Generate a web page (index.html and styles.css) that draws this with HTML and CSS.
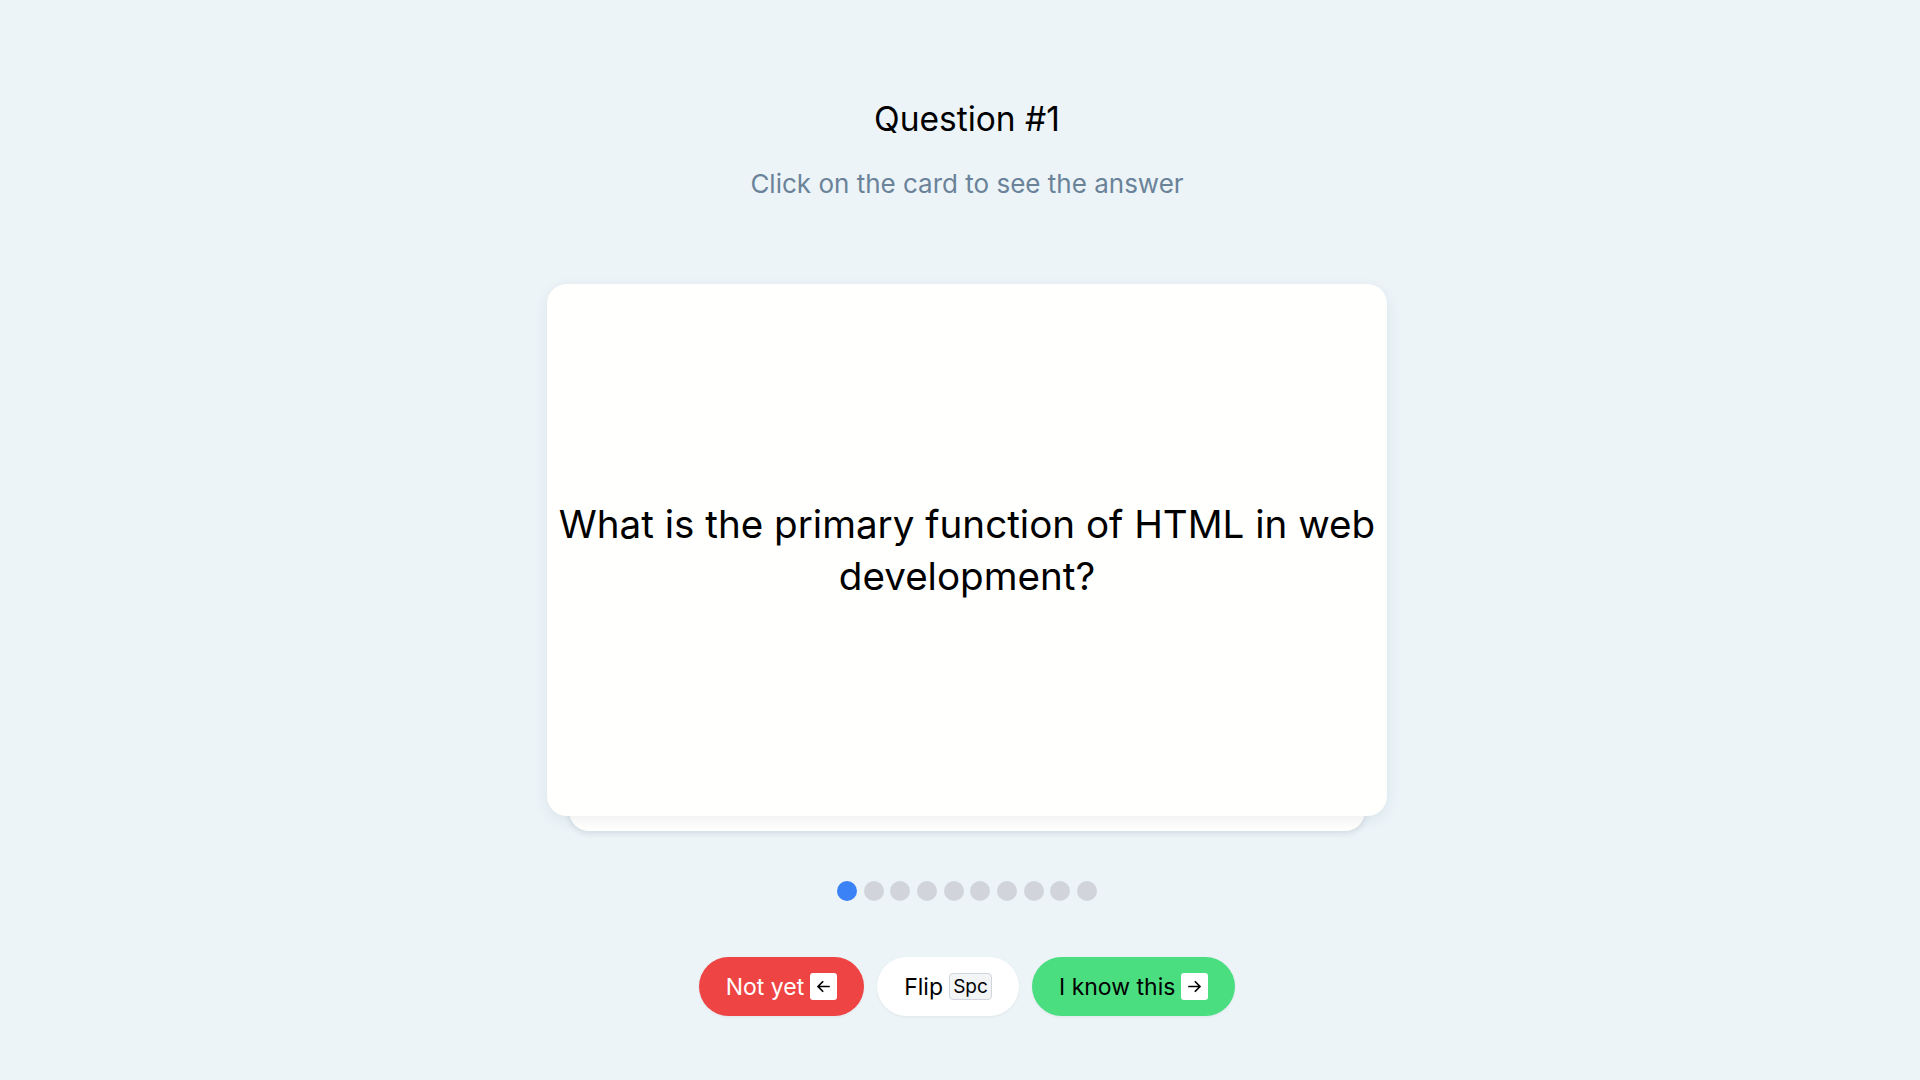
FILE: index.html
```html
<!DOCTYPE html>
<html lang="en">
<head>
<meta charset="utf-8">
<title>Flashcards</title>
<link rel="stylesheet" href="styles.css">
</head>
<body>
<main class="page">
  <h1 class="title">Question #1</h1>
  <p class="subtitle">Click on the card to see the answer</p>

  <div class="deck">
    <div class="card">
      <p class="question">What is the primary function of HTML in web development?</p>
    </div>
  </div>

  <div class="dots">
    <span class="dot active"></span>
    <span class="dot"></span>
    <span class="dot"></span>
    <span class="dot"></span>
    <span class="dot"></span>
    <span class="dot"></span>
    <span class="dot"></span>
    <span class="dot"></span>
    <span class="dot"></span>
    <span class="dot"></span>
  </div>

  <div class="actions">
    <button class="btn btn-red">Not yet
      <span class="key key-arrow"><svg viewBox="0 0 24 24" width="19" height="19"><path d="M19 12H5M11 6l-6 6 6 6" fill="none" stroke="#000" stroke-width="2.2" stroke-linecap="round" stroke-linejoin="round"/></svg></span>
    </button>
    <button class="btn btn-white">Flip <span class="key key-text">Spc</span></button>
    <button class="btn btn-green">I know this
      <span class="key key-arrow"><svg viewBox="0 0 24 24" width="19" height="19"><path d="M5 12h14M13 6l6 6-6 6" fill="none" stroke="#000" stroke-width="2.2" stroke-linecap="round" stroke-linejoin="round"/></svg></span>
    </button>
  </div>
</main>
</body>
</html>
```

FILE: styles.css
```css
* { box-sizing: border-box; }

html, body {
  margin: 0;
  padding: 0;
  background: #ecf4f8;
  font-family: "Inter", "Noto Sans", sans-serif;
  color: #000;
}

.page {
  display: flex;
  flex-direction: column;
  align-items: center;
  padding: 97px 0 0 14px;
  min-height: 1080px;
}

.title {
  margin: 0;
  font-size: 33.5px;
  font-weight: 400;
  line-height: 44px;
}

.subtitle {
  margin: 27px 0 0;
  font-size: 26px;
  line-height: 32px;
  color: #6a8398;
}

.deck {
  position: relative;
  margin-top: 84px;
  width: 840px;
  padding-bottom: 15px;
}

.deck::before {
  content: "";
  position: absolute;
  left: 22px;
  right: 22px;
  bottom: 0;
  height: 100px;
  background: #fffffd;
  border-radius: 20px;
  box-shadow: 0 2px 6px rgba(30, 50, 80, 0.14);
}

.card {
  position: relative;
  height: 532px;
  background: #fffffd;
  border-radius: 20px;
  box-shadow: 0 4px 14px rgba(30, 50, 80, 0.08);
  display: flex;
  align-items: center;
  justify-content: center;
  padding: 0 4px;
}

.question {
  margin: 0;
  text-align: center;
  font-size: 38.6px;
  line-height: 52px;
  font-weight: 400;
}

.dots {
  display: flex;
  gap: 6.67px;
  margin-top: 50px;
}

.dot {
  width: 20px;
  height: 20px;
  border-radius: 50%;
  background: #d1d5db;
}

.dot.active { background: #3b82f6; }

.actions {
  display: flex;
  gap: 13px;
  margin-top: 56px;
}

.btn {
  display: flex;
  align-items: center;
  gap: 6px;
  height: 59px;
  padding: 0 27px;
  border: none;
  border-radius: 30px;
  font-family: inherit;
  font-size: 23px;
  cursor: pointer;
  box-shadow: 0 1px 3px rgba(0, 0, 0, 0.06);
}

.btn-red { background: #ef4444; color: #fff; }
.btn-white { background: #fff; color: #000; }
.btn-green { background: #4ade80; color: #000; }

.key {
  display: flex;
  align-items: center;
  justify-content: center;
  height: 27px;
  border-radius: 3px;
}

.key-arrow {
  width: 27px;
  background: #fff;
}

.key-text {
  width: 43px;
  background: #f3f4f6;
  border: 1px solid #d1d5db;
  border-radius: 4px;
  font-size: 19px;
  color: #000;
}
```
